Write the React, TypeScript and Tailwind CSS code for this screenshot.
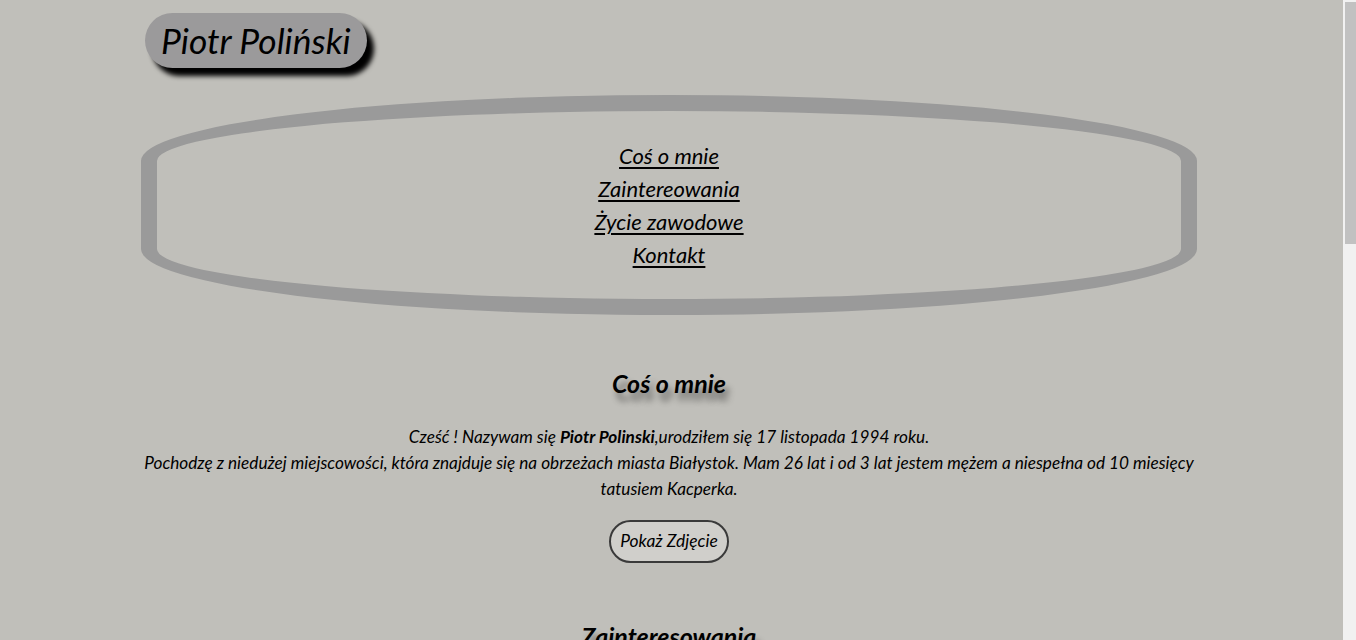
export default function App() {
  const links = ["Coś o mnie", "Zaintereowania", "Życie zawodowe", "Kontakt"];
  return (
    <div className="flex h-[640px] overflow-hidden bg-[#c0bfba] text-black italic" style={{ fontFamily: "Lato, 'Noto Sans', sans-serif" }}>
      <main className="min-w-0 flex-1">
        <div className="ml-[141px] w-[1056px] pt-[13px]">
          {/* Header pill */}
          <div className="ml-[4px] inline-flex h-[55px] items-center rounded-full bg-[#9b9a9b] px-[16px] shadow-[7px_8px_5px_#000]">
            <h1 className="text-[35.4px] leading-none">Piotr Poliński</h1>
          </div>

          {/* Nav ellipse */}
          <nav className="mt-[27px] flex h-[220px] flex-col items-center justify-center rounded-[50%/30%] border-[16px] border-[#9a9a9a]">
            {links.map((l) => (
              <a key={l} href="#" className="text-[22px] leading-[33px] underline underline-offset-[3px]">
                {l}
              </a>
            ))}
          </nav>

          {/* About */}
          <section className="mt-[51px] text-center">
            <h2 className="text-[25px] font-bold leading-[34px] [text-shadow:4px_8px_6px_rgba(0,0,0,0.45)]">Coś o mnie</h2>
            <p className="mt-[24px] text-[17.2px] leading-[26px]">
              Cześć ! Nazywam się <b>Piotr Polinski</b>,urodziłem się 17 listopada 1994 roku.
              <br />
              Pochodzę z niedużej miejscowości, która znajduje się na obrzeżach miasta Białystok. Mam 26 lat i od 3 lat jestem mężem a niespełna od 10 miesięcy tatusiem Kacperka.
            </p>
            <button className="mt-[18px] h-[43px] rounded-full border-2 border-[#3a3a3a] bg-[#d0cfcb] px-[9px] text-[17.4px] italic">
              Pokaż Zdjęcie
            </button>
          </section>

          <section className="mt-[56px] text-center">
            <h2 className="text-[25px] font-bold leading-[34px] [text-shadow:4px_8px_6px_rgba(0,0,0,0.45)]">Zainteresowania</h2>
          </section>
        </div>
      </main>

      {/* Scrollbar */}
      <div className="w-[13px] shrink-0 bg-[#f1f1f1] pl-[2px] pt-[2px]">
        <div className="h-[242px] bg-[#c1c1c1]" />
      </div>
    </div>
  );
}
